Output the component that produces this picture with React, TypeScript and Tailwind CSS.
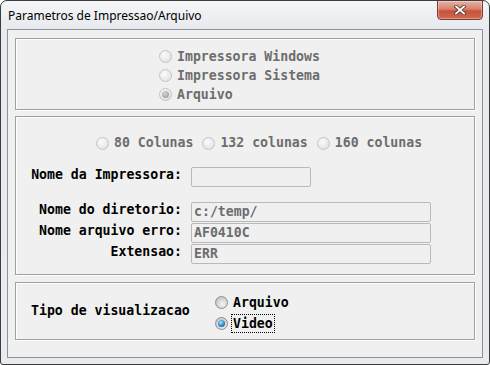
import React from 'react';

const mono = { fontFamily: '"DejaVu Sans Mono", "Liberation Mono", monospace' };

function Radio({ checked, disabled, blue }: { checked?: boolean; disabled?: boolean; blue?: boolean }) {
  return (
    <span
      className={
        'flex items-center justify-center w-[13px] h-[13px] rounded-full border shrink-0 ' +
        (disabled
          ? 'border-[#c4c4c4] bg-[radial-gradient(circle_at_40%_35%,#fbfbfb,#dcdcdc)]'
          : 'border-[#8e8f8f] bg-[radial-gradient(circle_at_60%_65%,#f4f4f4,#cfcfcf_60%,#b9b9b9)]')
      }
    >
      {checked && (
        <span
          className={
            'w-[7px] h-[7px] rounded-full ' +
            (blue
              ? 'bg-[radial-gradient(circle_at_40%_35%,#9fe3ff,#1a6fb5_70%,#0b3f78)]'
              : 'bg-[radial-gradient(circle_at_40%_35%,#d6d6d6,#8d8d8d)]')
          }
        />
      )}
    </span>
  );
}

function Field({ label, value, width }: { label: string; value: string; width: string }) {
  return (
    <div className="flex items-center h-[20px]">
      <span className="w-[151px] shrink-0 text-right pb-[4px] text-black font-bold whitespace-nowrap">{label}</span>
      <div
        className={
          'ml-[9px] h-[20px] border border-[#b9b9b9] rounded-[2px] bg-[#f0f0f0] text-[#6d6d6d] font-bold pl-[2px] flex items-center ' +
          width
        }
      >
        {value}
      </div>
    </div>
  );
}

function Group({ className, children }: { className: string; children: React.ReactNode }) {
  return (
    <div
      className={
        'mx-[7px] border border-[#a0a0a0] shadow-[1px_1px_0_#ffffff,inset_1px_1px_0_#ffffff] ' + className
      }
    >
      {children}
    </div>
  );
}

export default function App() {
  return (
    <div className="w-[490px] h-[365px] bg-white">
      <div className="w-[490px] h-[365px] flex flex-col border border-[#3c3c3c] rounded-t-[7px] rounded-b-[3px] bg-[linear-gradient(180deg,#f4f6f8_0px,#e7eaee_28px,#e9ecef_100%)] overflow-hidden">
        <div className="h-[28px] flex items-start relative">
          <span
            className="pl-[7px] pt-[6px] text-[12px] text-black"
            style={{ fontFamily: '"Noto Sans", "Liberation Sans", sans-serif' }}
          >
            Parametros de Impressao/Arquivo
          </span>
          <div className="ml-auto mr-[6px] w-[46px] h-[20px] -mt-px rounded-b-[4px] border border-[#7a3a30] bg-[linear-gradient(180deg,#eab2a4_0%,#d8806c_45%,#c4533b_55%,#d06a50_100%)] flex items-center justify-center shadow-[inset_0_0_0_1px_rgba(255,255,255,0.35)]">
            <svg width="12" height="10" viewBox="0 0 12 10">
              <path d="M2 1.5 L10 8.5 M10 1.5 L2 8.5" stroke="#5a3a36" strokeWidth="3.6" strokeLinecap="square" />
              <path d="M2 1.5 L10 8.5 M10 1.5 L2 8.5" stroke="#ffffff" strokeWidth="1.8" strokeLinecap="square" />
            </svg>
          </div>
        </div>
        <div
          className="mx-[6px] h-[329px] border border-[#8e9196] bg-[#f0f0f0] pt-[8px] text-[13.2px] leading-none whitespace-nowrap"
          style={mono}
        >
          <Group className="h-[72px] pt-[8px] pl-[143px] flex flex-col text-[#6d6d6d] font-bold">
            <div className="h-[19px] flex items-center gap-[5px]">
              <Radio disabled />
              <span>Impressora Windows</span>
            </div>
            <div className="h-[19px] flex items-center gap-[5px]">
              <Radio disabled />
              <span>Impressora Sistema</span>
            </div>
            <div className="h-[19px] flex items-center gap-[5px]">
              <Radio disabled checked />
              <span>Arquivo</span>
            </div>
          </Group>
          <Group className="mt-[6px] h-[159px] pt-[17px] pl-[15px] flex flex-col">
            <div className="h-[18px] flex items-center pl-[65px] text-[#6d6d6d] font-bold">
              <Radio disabled />
              <span className="ml-[5px]">80 Colunas</span>
              <span className="ml-[9px]">
                <Radio disabled />
              </span>
              <span className="ml-[5px]">132 colunas</span>
              <span className="ml-[9px]">
                <Radio disabled />
              </span>
              <span className="ml-[5px]">160 colunas</span>
            </div>
            <div className="mt-[15px]">
              <Field label="Nome da Impressora:" value="" width="w-[120px]" />
            </div>
            <div className="mt-[15px] flex flex-col gap-[1px]">
              <Field label="Nome do diretorio:" value="c:/temp/" width="w-[240px]" />
              <Field label="Nome arquivo erro:" value="AF0410C" width="w-[240px]" />
              <Field label="Extensao:" value="ERR" width="w-[240px]" />
            </div>
          </Group>
          <Group className="mt-[7px] h-[58px] pt-[9px] pl-[15px] flex font-bold text-black">
            <span className="w-[160px] shrink-0 mt-[12px]">Tipo de visualizacao</span>
            <div className="ml-[24px] flex flex-col">
              <div className="h-[21px] flex items-center gap-[4px]">
                <Radio />
                <span className="px-px">Arquivo</span>
              </div>
              <div className="h-[21px] flex items-center gap-[4px]">
                <Radio checked blue />
                <span className="px-px py-[2px] outline outline-1 outline-dotted outline-black">Video</span>
              </div>
            </div>
          </Group>
        </div>
      </div>
    </div>
  );
}
